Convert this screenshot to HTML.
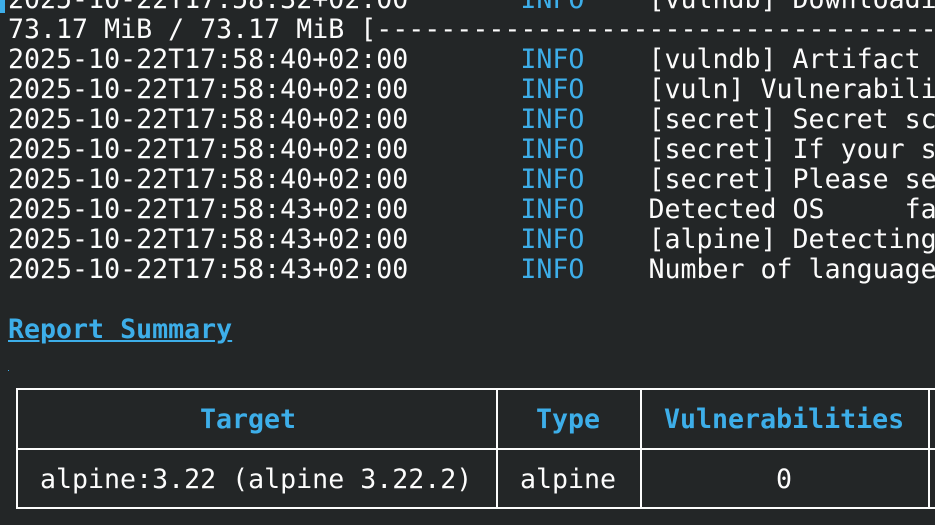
<!DOCTYPE html>
<html><head><meta charset="utf-8"><style>
html,body{margin:0;padding:0;background:#232627;width:935px;height:525px;overflow:hidden;position:relative}
pre{position:absolute;left:8px;top:-15px;margin:0;font-family:"DejaVu Sans Mono","Liberation Mono",monospace;font-size:26.6px;line-height:30px;color:#fcfcfc;white-space:pre}
.b{color:#3daee9}
.u{color:#3daee9;font-weight:bold;text-decoration:underline}
.l{position:absolute;background:#fcfcfc}
.t{position:absolute;font-family:"DejaVu Sans Mono","Liberation Mono",monospace;font-size:26.6px;line-height:30px;color:#fcfcfc;white-space:pre}
.h{color:#3daee9;font-weight:bold}
</style></head><body>
<div style="position:absolute;left:0;top:0;width:5px;height:13px;background:#3daee9"></div>
<pre>2025-10-22T17:58:32+02:00       <span class="b">INFO</span>    [vulndb] Downloading
73.17 MiB / 73.17 MiB [-----------------------------------------
2025-10-22T17:58:40+02:00       <span class="b">INFO</span>    [vulndb] Artifact s
2025-10-22T17:58:40+02:00       <span class="b">INFO</span>    [vuln] Vulnerabilit
2025-10-22T17:58:40+02:00       <span class="b">INFO</span>    [secret] Secret sca
2025-10-22T17:58:40+02:00       <span class="b">INFO</span>    [secret] If your sc
2025-10-22T17:58:40+02:00       <span class="b">INFO</span>    [secret] Please see
2025-10-22T17:58:43+02:00       <span class="b">INFO</span>    Detected OS     fam
2025-10-22T17:58:43+02:00       <span class="b">INFO</span>    [alpine] Detecting
2025-10-22T17:58:43+02:00       <span class="b">INFO</span>    Number of languages

<span class="u">Report Summary</span></pre>
<div style="position:absolute;left:8px;top:370px;width:1px;height:1px;background:#3daee9"></div>
<div class="l" style="left:16px;top:388px;width:919px;height:2px"></div>
<div class="l" style="left:16px;top:448px;width:919px;height:2px"></div>
<div class="l" style="left:16px;top:507px;width:919px;height:2px"></div>
<div class="l" style="left:16px;top:388px;width:2px;height:121px"></div>
<div class="l" style="left:496px;top:388px;width:2px;height:121px"></div>
<div class="l" style="left:640px;top:388px;width:2px;height:121px"></div>
<div class="l" style="left:928px;top:388px;width:2px;height:121px"></div>
<div class="t h" style="left:200px;top:405px">Target</div>
<div class="t h" style="left:536px;top:405px">Type</div>
<div class="t h" style="left:664px;top:405px">Vulnerabilities</div>
<div class="t" style="left:40px;top:465px">alpine:3.22 (alpine 3.22.2)</div>
<div class="t" style="left:520px;top:465px">alpine</div>
<div class="t" style="left:776px;top:465px">0</div>
</body></html>
